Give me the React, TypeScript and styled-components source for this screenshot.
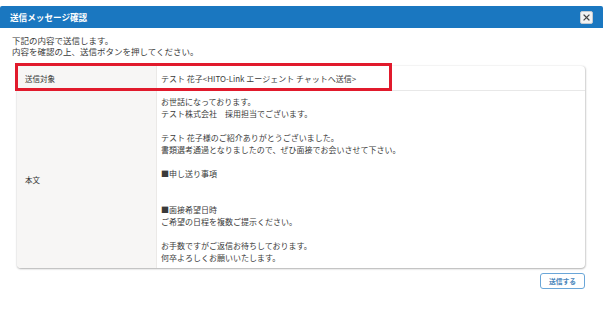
import React from "react";
import styled, { createGlobalStyle } from "styled-components";

const Global = createGlobalStyle`
  html, body { margin: 0; padding: 0; background: #fff; }
  body { font-family: "Noto Sans CJK JP", "Noto Sans", sans-serif; color: #333; }
`;

const Dialog = styled.div`
  width: 603px;
  padding-top: 6px;
`;

const Header = styled.div`
  height: 22px;
  background: #1a77c0;
  display: flex;
  align-items: center;
  justify-content: space-between;
  padding: 0 10px 0 10px;
  border-radius: 2px 2px 0 0;
`;

const Title = styled.div`
  color: #fff;
  font-size: 8.6px;
  font-weight: 700;
  line-height: 1;
`;

const CloseButton = styled.button`
  width: 13px;
  height: 13px;
  padding: 0;
  border: 1px solid #c4cad0;
  border-radius: 2px;
  background: #f2f2f2;
  display: flex;
  align-items: center;
  justify-content: center;
`;

const Body = styled.div`
  padding: 7px 0 0 0;
`;

const Intro = styled.p`
  margin: 0 0 0 12px;
  font-size: 8.5px;
  line-height: 11px;
  color: #3a3a3a;
`;

const CardWrap = styled.div`
  position: relative;
  margin: 9px 0 0 17px;
  width: 568px;
`;

const Card = styled.div`
  display: grid;
  grid-template-columns: 140px 1fr;
  border-radius: 4px;
  overflow: hidden;
  background: #fff;
  box-shadow: 0 1px 2px rgba(0, 0, 0, 0.28), 1px 0 2px rgba(0, 0, 0, 0.12);
`;

const Label = styled.div<{ $last?: boolean }>`
  background: #f7f6f5;
  border-right: 1px solid #ebe9e7;
  border-bottom: ${(p) => (p.$last ? "none" : "1px solid #e8e8e8")};
  display: flex;
  align-items: center;
  padding-left: 8px;
  font-size: 7.5px;
  color: #333;
`;

const Value = styled.div<{ $last?: boolean }>`
  border-bottom: ${(p) => (p.$last ? "none" : "1px solid #e8e8e8")};
  padding-left: 4px;
  font-size: 8px;
  color: #3a3a3a;
`;

const TargetValue = styled(Value)`
  height: 24px;
  display: flex;
  align-items: center;
`;

const MessageValue = styled(Value)`
  padding-top: 5px;
  padding-bottom: 4px;
  line-height: 12px;
  white-space: pre-line;
  min-height: 168px;
`;

const Highlight = styled.div`
  position: absolute;
  left: -2px;
  top: -3px;
  width: 377px;
  height: 28px;
  box-sizing: border-box;
  border: 3px solid #e11a2c;
  pointer-events: none;
`;

const Footer = styled.div`
  display: flex;
  justify-content: flex-end;
  width: 585px;
  margin-top: 5px;
`;

const SendButton = styled.button`
  width: 45px;
  height: 16px;
  padding: 0;
  border: 1px solid #6aa6d8;
  border-radius: 3px;
  background: #fff;
  color: #4a86bb;
  font-family: "Noto Sans CJK JP", sans-serif;
  font-size: 6.8px;
  font-weight: 700;
  display: flex;
  align-items: center;
  justify-content: center;
`;

const message = `お世話になっております。
テスト株式会社　採用担当でございます。

テスト 花子様のご紹介ありがとうございました。
書類選考通過となりましたので、ぜひ面接でお会いさせて下さい。

■申し送り事項


■面接希望日時
ご希望の日程を複数ご提示ください。

お手数ですがご返信お待ちしております。
何卒よろしくお願いいたします。`;

export default function App() {
  return (
    <>
      <Global />
      <Dialog>
        <Header>
          <Title>送信メッセージ確認</Title>
          <CloseButton aria-label="close">
            <svg width="7" height="7" viewBox="0 0 7 7">
              <path d="M1 1 L6 6 M6 1 L1 6" stroke="#444" strokeWidth="1.2" strokeLinecap="square" />
            </svg>
          </CloseButton>
        </Header>
        <Body>
          <Intro>
            下記の内容で送信します。
            <br />
            内容を確認の上、送信ボタンを押してください。
          </Intro>
          <CardWrap>
            <Card>
              <Label>送信対象</Label>
              <TargetValue>テスト 花子&lt;HITO-Link エージェント チャットへ送信&gt;</TargetValue>
              <Label $last>本文</Label>
              <MessageValue $last>{message}</MessageValue>
            </Card>
            <Highlight />
          </CardWrap>
          <Footer>
            <SendButton>送信する</SendButton>
          </Footer>
        </Body>
      </Dialog>
    </>
  );
}
